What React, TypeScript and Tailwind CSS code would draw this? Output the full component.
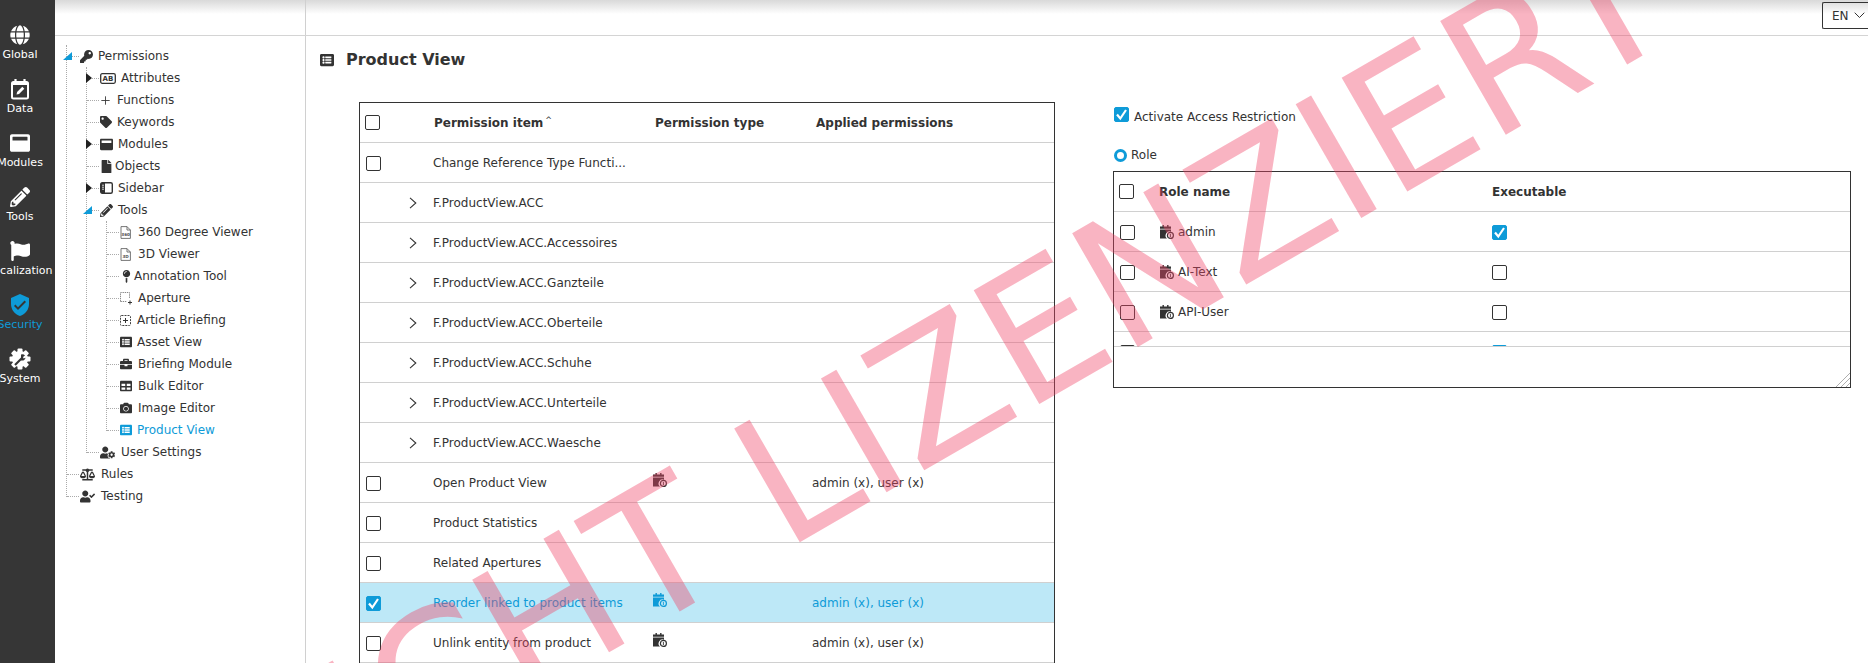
import React from "react";
import {
  FaGlobe, FaWindowMaximize, FaPencilAlt, FaFlag, FaKey, FaTag, FaFile, FaUserCog,
  FaBalanceScale, FaUserCheck, FaCamera, FaBriefcase, FaTable, FaMapPin, FaListAlt,
} from "react-icons/fa";
import { MdVerifiedUser } from "react-icons/md";
import { LuPlus } from "react-icons/lu";

const CalendarIcon = () => (
  <svg width="14" height="14" viewBox="0 0 14 14" className="shrink-0">
    <path fill="currentColor" d="M2.5 0h1.4v1.5h3.2V0h1.4v1.5H11v2.2H0V1.5h2.5zM0 4.5h11v2.2a4 4 0 0 0-4 6.8H0z" />
    <circle cx="10.4" cy="10.4" r="3" fill="none" stroke="currentColor" strokeWidth="1.2" />
    <path d="M10.4 8.8v3.2" fill="none" stroke="currentColor" strokeWidth="0.9" />
  </svg>
);

const DataIcon = () => (
  <svg width="20" height="22" viewBox="0 0 20 22" fill="none">
    <rect x="2" y="4" width="16" height="16.5" rx="1.5" stroke="white" strokeWidth="2" />
    <path d="M2 5h16v2H2z" fill="white" />
    <path d="M5.5 1v4M14.5 1v4" stroke="white" strokeWidth="2.2" />
    <path d="M6.5 16.5l.6-2.6 5.2-5.2 2 2-5.2 5.2z" fill="white" />
  </svg>
);

const SystemIcon = () => (
  <svg width="22" height="22" viewBox="0 0 22 22">
    <circle cx="11" cy="11" r="8" fill="white" />
    {[0, 45, 90, 135, 180, 225, 270, 315].map((a) => (
      <rect key={a} x="8.5" y="0.5" width="5" height="5" rx="1" fill="white" transform={`rotate(${a} 11 11)`} />
    ))}
    <path d="M6 17l7-7" stroke="#363636" strokeWidth="2.2" />
    <path d="M12 6.5a3.5 3.5 0 0 1 4 1l-2 1.6.6 1.3 2-.6a3.5 3.5 0 0 1-4.6 2.6" fill="#363636" />
  </svg>
);

const AttrIcon = () => (
  <svg width="16" height="11" viewBox="0 0 16 11">
    <rect x="0.7" y="0.7" width="14.6" height="9.6" rx="1.5" fill="none" stroke="currentColor" strokeWidth="1.3" />
    <text x="8" y="8.2" textAnchor="middle" fontSize="7" fontWeight="700" fill="currentColor" fontFamily="DejaVu Sans">AB</text>
  </svg>
);

const SidebarIcon = () => (
  <svg width="13" height="12" viewBox="0 0 13 12">
    <rect x="0.7" y="0.7" width="11.6" height="10.6" rx="1.5" fill="none" stroke="currentColor" strokeWidth="1.4" />
    <path d="M1 1h4v10H1z" fill="currentColor" />
    <path d="M2 3.2h2M2 5.2h2M2 7.2h2" stroke="white" strokeWidth="0.8" />
  </svg>
);

const DocIcon = ({ label }: { label: string }) => (
  <svg width="11" height="13" viewBox="0 0 11 13">
    <path d="M1 .6h6l3.4 3.4v8.4H1z" fill="white" stroke="#666" strokeWidth="0.9" />
    <path d="M7 .6V4h3.4" fill="none" stroke="#666" strokeWidth="0.9" />
    <text x="5.6" y="10" textAnchor="middle" fontSize="4.2" fontWeight="700" fill="#555" fontFamily="DejaVu Sans">{label}</text>
  </svg>
);

const ApertureIcon = () => (
  <svg width="13" height="13" viewBox="0 0 13 13" fill="none">
    <path d="M.5 9.5V.5h9v6" stroke="#888" strokeWidth="1" strokeDasharray="1.4 .8" />
    <path d="M.5 9.5h6" stroke="#888" strokeWidth="1" strokeDasharray="1.4 .8" />
    <path d="M10 8.5v4M8 10.5h4" stroke="#333" strokeWidth="1" />
  </svg>
);

const BriefingIcon = () => (
  <svg width="11" height="11" viewBox="0 0 11 11" fill="none">
    <rect x=".5" y=".5" width="10" height="10" rx="1" stroke="#444" strokeWidth="1" strokeDasharray="2 1" />
    <path d="M5.5 3v5M3 5.5h5" stroke="#333" strokeWidth="1" />
  </svg>
);

const Toggle = ({ open }: { open?: boolean }) =>
  open ? (
    <svg width="9" height="8" viewBox="0 0 9 8" className="absolute left-[3px] top-[7px]">
      <path d="M9 0v8H0z" fill="#0e9bd8" />
    </svg>
  ) : (
    <svg width="6" height="10" viewBox="0 0 6 10" className="absolute left-[6px] top-[6px]">
      <path d="M0 0l6 5-6 5z" fill="#222" />
    </svg>
  );

type TreeRow = {
  level: "l0" | "l1" | "l2";
  label: string;
  icon: React.ReactNode;
  slot: string;
  toggle?: "open" | "closed";
  active?: boolean;
};

const rows: TreeRow[] = [
  { level: "l0", label: "Permissions", icon: <FaKey size={13} />, slot: "w-[18px]", toggle: "open" },
  { level: "l1", label: "Attributes", icon: <AttrIcon />, slot: "w-[21px]", toggle: "closed" },
  { level: "l1", label: "Functions", icon: <LuPlus size={13} strokeWidth={1.6} className="-ml-[1px]" />, slot: "w-[17px]" },
  { level: "l1", label: "Keywords", icon: <FaTag size={12} />, slot: "w-[17px]" },
  { level: "l1", label: "Modules", icon: <FaWindowMaximize size={13} />, slot: "w-[18px]", toggle: "closed" },
  { level: "l1", label: "Objects", icon: <FaFile size={13} />, slot: "w-[15px]" },
  { level: "l1", label: "Sidebar", icon: <SidebarIcon />, slot: "w-[18px]", toggle: "closed" },
  { level: "l1", label: "Tools", icon: <FaPencilAlt size={13} />, slot: "w-[18px]", toggle: "open" },
  { level: "l2", label: "360 Degree Viewer", icon: <DocIcon label="360" />, slot: "w-[18px]" },
  { level: "l2", label: "3D Viewer", icon: <DocIcon label="3D" />, slot: "w-[18px]" },
  { level: "l2", label: "Annotation Tool", icon: <FaMapPin size={13} />, slot: "w-[14px]" },
  { level: "l2", label: "Aperture", icon: <ApertureIcon />, slot: "w-[18px]" },
  { level: "l2", label: "Article Briefing", icon: <BriefingIcon />, slot: "w-[17px]" },
  { level: "l2", label: "Asset View", icon: <FaListAlt size={12} />, slot: "w-[17px]" },
  { level: "l2", label: "Briefing Module", icon: <FaBriefcase size={12} />, slot: "w-[18px]" },
  { level: "l2", label: "Bulk Editor", icon: <FaTable size={12} />, slot: "w-[18px]" },
  { level: "l2", label: "Image Editor", icon: <FaCamera size={12} />, slot: "w-[18px]" },
  { level: "l2", label: "Product View", icon: <FaListAlt size={12} />, slot: "w-[17px]", active: true },
  { level: "l1", label: "User Settings", icon: <FaUserCog size={15} />, slot: "w-[21px]" },
  { level: "l0", label: "Rules", icon: <FaBalanceScale size={15} />, slot: "w-[21px]" },
  { level: "l0", label: "Testing", icon: <FaUserCheck size={15} />, slot: "w-[21px]" },
];

const indent = { l0: "w-[5px]", l1: "w-[25px]", l2: "w-[45px]" };

const nav = [
  { label: "Global", icon: <FaGlobe size={20} color="white" /> },
  { label: "Data", icon: <DataIcon /> },
  { label: "Modules", icon: <FaWindowMaximize size={20} color="white" /> },
  { label: "Tools", icon: <FaPencilAlt size={20} color="white" /> },
  { label: "Localization", icon: <FaFlag size={20} color="white" /> },
  { label: "Security", icon: <MdVerifiedUser size={24} color="#0e9bd8" />, active: true },
  { label: "System", icon: <SystemIcon /> },
];

const Box = ({ checked, className = "" }: { checked?: boolean; className?: string }) => (
  <span
    className={`flex h-[15px] w-[15px] shrink-0 items-center justify-center rounded-[2px] border ${
      checked ? "border-[#0e9bd8] bg-[#0e9bd8]" : "border-[#333]"
    } ${className}`}
  >
    {checked && (
      <svg width="13" height="13" viewBox="0 0 13 13">
        <path d="M2 6.5l3.3 4L11 2" fill="none" stroke="white" strokeWidth="2.2" />
      </svg>
    )}
  </span>
);

type PermRow = { name: string; kind: "check" | "group"; type?: boolean; applied?: string; selected?: boolean };

const perms: PermRow[] = [
  { name: "Change Reference Type Functi...", kind: "check" },
  { name: "F.ProductView.ACC", kind: "group" },
  { name: "F.ProductView.ACC.Accessoires", kind: "group" },
  { name: "F.ProductView.ACC.Ganzteile", kind: "group" },
  { name: "F.ProductView.ACC.Oberteile", kind: "group" },
  { name: "F.ProductView.ACC.Schuhe", kind: "group" },
  { name: "F.ProductView.ACC.Unterteile", kind: "group" },
  { name: "F.ProductView.ACC.Waesche", kind: "group" },
  { name: "Open Product View", kind: "check", type: true, applied: "admin (x), user (x)" },
  { name: "Product Statistics", kind: "check" },
  { name: "Related Apertures", kind: "check" },
  { name: "Reorder linked to product items", kind: "check", type: true, applied: "admin (x), user (x)", selected: true },
  { name: "Unlink entity from product", kind: "check", type: true, applied: "admin (x), user (x)" },
];

const roles = [
  { name: "admin", exec: true },
  { name: "AI-Text", exec: false },
  { name: "API-User", exec: false },
];

export default function App() {
  return (
    <div className="relative flex h-[663px] w-[1868px] overflow-hidden bg-white font-['DejaVu_Sans'] text-[12px] text-[#333]">
      <nav className="flex w-[55px] shrink-0 flex-col overflow-hidden bg-[#363636] pt-[24px]">
        {nav.map((n) => (
          <div key={n.label} className="flex h-[54px] w-[40px] flex-col items-center">
            <div className="flex h-[22px] items-center justify-center">{n.icon}</div>
            <span className={`mt-[2px] whitespace-nowrap text-[11px] leading-[14px] ${n.active ? "text-[#0e9bd8]" : "text-white"}`}>
              {n.label}
            </span>
          </div>
        ))}
      </nav>

      <div className="flex min-w-0 flex-1 flex-col">
        <header className="flex h-[36px] shrink-0 border-b border-[#d4d4d4] bg-gradient-to-b from-[#d9d9d9] via-white via-40% to-white">
          <div className="w-[251px] border-r border-[#d0d0d0]" />
          <div className="flex flex-1 justify-end pt-[2px]">
            <div className="flex h-[27px] w-[46px] items-center gap-[5px] rounded-l-[2px] border border-r-0 border-[#333] pl-[9px] text-[12px]">
              EN
              <svg width="11" height="7" viewBox="0 0 11 7" fill="none">
                <path d="M.7.7l4.8 4.8L10.3.7" stroke="#333" strokeWidth="1" />
              </svg>
            </div>
          </div>
        </header>

        <div className="flex min-h-0 flex-1">
          <aside className="relative w-[251px] shrink-0 border-r border-[#d0d0d0] pt-[9px]">
            <span className="absolute left-[11px] top-[9px] h-[452px] border-l border-dotted border-[#aaa]" />
            <span className="absolute left-[31px] top-[31px] h-[386px] border-l border-dotted border-[#aaa]" />
            <span className="absolute left-[51px] top-[185px] h-[210px] border-l border-dotted border-[#aaa]" />
            {rows.map((r) => (
              <div key={r.label} className={`relative flex h-[22px] items-center ${r.active ? "text-[#0e9bd8]" : ""}`}>
                <span className={`${indent[r.level]} shrink-0`} />
                <span className="relative flex h-[22px] w-[20px] shrink-0 items-center">
                  <span className="ml-[7px] w-[12px] border-t border-dotted border-[#aaa]" />
                  {r.toggle && <Toggle open={r.toggle === "open"} />}
                </span>
                <span className={`${r.slot} flex shrink-0 items-center`}>{r.icon}</span>
                <span className="whitespace-nowrap">{r.label}</span>
              </div>
            ))}
          </aside>

          <main className="min-w-0 flex-1">
            <div className="flex h-[46px] items-center pl-[14px] pt-[1px]">
              <FaListAlt size={14} className="mr-[12px]" />
              <h1 className="text-[16px] font-bold">Product View</h1>
            </div>

            <div className="flex items-start pl-[53px] pt-[20px]">
              <section className="w-[696px] shrink-0 border-x border-t border-[#333]">
                <div className="flex h-[40px] items-center border-b border-[#d0d0d0] font-bold">
                  <Box className="ml-[5px]" />
                  <span className="ml-[54px] flex w-[221px] items-center">
                    Permission item <span className="mb-[3px] ml-[2px] text-[8px] font-normal">^</span>
                  </span>
                  <span className="w-[161px]">Permission type</span>
                  <span>Applied permissions</span>
                </div>
                {perms.map((p) => (
                  <div
                    key={p.name}
                    className={`flex h-[40px] items-center border-b border-[#d0d0d0] ${p.selected ? "bg-[#bde8f7] text-[#0e9bd8]" : ""}`}
                  >
                    <span className="flex w-[73px] shrink-0 items-center">
                      {p.kind === "check" ? (
                        <Box checked={p.selected} className="ml-[6px] mt-[1px]" />
                      ) : (
                        <svg width="8" height="12" viewBox="0 0 8 12" fill="none" className="ml-[49px]">
                          <path d="M1 .8L6.8 6 1 11.2" stroke="#333" strokeWidth="1.1" />
                        </svg>
                      )}
                    </span>
                    <span className="w-[220px] shrink-0 whitespace-nowrap">{p.name}</span>
                    <span className="mb-[6px] w-[159px] shrink-0">{p.type && <CalendarIcon />}</span>
                    <span>{p.applied}</span>
                  </div>
                ))}
              </section>

              <section className="ml-[58px] w-[738px] shrink-0">
                <label className="mt-[5px] flex h-[15px] items-center gap-[5px] pl-[1px]">
                  <Box checked />
                  <span className="mt-[5px]">Activate Access Restriction</span>
                </label>
                <div className="mt-[26px] flex h-[14px] items-center gap-[4px] pl-[1px]">
                  <span className="h-[13px] w-[13px] rounded-full border-[3px] border-[#0e9bd8]" />
                  <span>Role</span>
                </div>
                <div className="relative mt-[9px] h-[217px] border border-[#333]">
                  <div className="h-[175px] overflow-hidden border-b border-[#d0d0d0]">
                    <div className="flex h-[40px] items-center border-b border-[#d0d0d0] font-bold">
                      <Box className="ml-[5px]" />
                      <span className="ml-[25px] w-[333px]">Role name</span>
                      <span>Executable</span>
                    </div>
                    {roles.map((r) => (
                      <div key={r.name} className="flex h-[40px] items-center border-b border-[#d0d0d0]">
                        <Box className="ml-[6px] mt-[1px]" />
                        <span className="ml-[25px] flex w-[332px] items-center gap-[4px]">
                          <CalendarIcon />
                          <span>{r.name}</span>
                        </span>
                        <Box checked={r.exec} className="mt-[1px]" />
                      </div>
                    ))}
                    <div className="flex h-[40px] pt-[13px]">
                      <Box className="ml-[6px]" />
                      <Box checked className="ml-[357px]" />
                    </div>
                  </div>
                  <svg width="15" height="15" viewBox="0 0 15 15" className="absolute bottom-0 right-0" fill="none" stroke="#999" strokeWidth="0.8">
                    <path d="M1 15L15 1M6 15l9-9M11 15l4-4" />
                  </svg>
                </div>
              </section>
            </div>
          </main>
        </div>
      </div>

      <div className="pointer-events-none absolute left-[251px] top-[707px] origin-[0_152px] -rotate-30 whitespace-nowrap text-[180px] leading-none text-[#f04466]/40">
        NICHT LIZENZIERT
      </div>
    </div>
  );
}
